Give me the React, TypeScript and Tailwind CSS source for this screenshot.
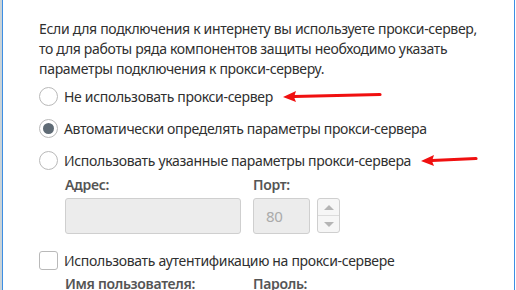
function Radio({ checked }: { checked?: boolean }) {
  return (
    <span className="flex h-[19px] w-[19px] shrink-0 items-center justify-center rounded-full border border-[#b9b9b9] bg-white">
      {checked && <span className="h-[11px] w-[11px] rounded-full bg-[#5f6b75]" />}
    </span>
  );
}

function Arrow({ width }: { width: number }) {
  return (
    <svg width={width} height="14" viewBox={`0 0 ${width} 14`} className="shrink-0">
      <path d={`M12 7.5 L${width - 2} 5.5`} stroke="#f01010" strokeWidth="3.2" strokeLinecap="round" />
      <path d="M1 8 L14 2 L12 8 L14 13 Z" fill="#f01010" />
    </svg>
  );
}

export default function App() {
  return (
    <div
      className="flex h-[290px] w-[516px] overflow-hidden bg-white text-[14px] tracking-[-0.32px] text-[#2f2f2f]"
      style={{ fontFamily: '"Noto Sans", "Open Sans", sans-serif' }}
    >
      <div className="w-[2px] shrink-0 bg-[#c9d3d8]" />
      <div className="w-[1px] shrink-0 bg-[#3d8ee3]" />
      <div className="flex-1 whitespace-nowrap pl-[36px] pt-[19px]">
        <p className="leading-[20px]">
          Если для подключения к интернету вы используете прокси-сервер,
          <br />
          то для работы ряда компонентов защиты необходимо указать
          <br />
          параметры подключения к прокси-серверу.
        </p>
        <div className="mt-[6px] flex h-[22px] items-center gap-[6px]">
          <Radio />
          <span>Не использовать прокси-сервер</span>
          <span className="ml-[3px]">
            <Arrow width={100} />
          </span>
        </div>
        <div className="mt-[10px] flex h-[22px] items-center gap-[6px]">
          <Radio checked />
          <span>Автоматически определять параметры прокси-сервера</span>
        </div>
        <div className="mt-[10px] flex h-[22px] items-center gap-[6px]">
          <Radio />
          <span>Использовать указанные параметры прокси-сервера</span>
          <span className="ml-[3px]">
            <Arrow width={58} />
          </span>
        </div>
        <div className="ml-[26px] mt-[4px] flex gap-[12px]">
          <div className="flex flex-col">
            <span className="font-semibold leading-[20px] text-[#555]">Адрес:</span>
            <div className="mt-[3px] h-[36px] w-[176px] rounded-[3px] border border-[#cfcfcf] bg-[#ececec]" />
          </div>
          <div className="flex flex-col">
            <span className="font-semibold leading-[20px] text-[#555]">Порт:</span>
            <div className="mt-[3px] flex gap-[7px]">
              <div className="flex h-[36px] w-[57px] items-center rounded-[3px] border border-[#cfcfcf] bg-[#ececec] pl-[12px] text-[15px] text-[#aaa]">
                80
              </div>
              <div className="flex h-[35px] w-[23px] flex-col overflow-hidden rounded-[3px] border border-[#cfcfcf] bg-[#f6f6f6]">
                <div className="flex flex-1 items-center justify-center border-b border-[#dcdcdc]">
                  <span className="h-0 w-0 border-x-[5px] border-b-[5px] border-x-transparent border-b-[#b5b5b5]" />
                </div>
                <div className="flex flex-1 items-center justify-center">
                  <span className="h-0 w-0 border-x-[5px] border-t-[5px] border-x-transparent border-t-[#b5b5b5]" />
                </div>
              </div>
            </div>
          </div>
        </div>
        <div className="mt-[16px] flex h-[20px] items-center gap-[6px]">
          <span className="h-[19px] w-[19px] shrink-0 rounded-[3px] border border-[#b9b9b9] bg-white" />
          <span>Использовать аутентификацию на прокси-сервере</span>
        </div>
        <div className="ml-[26px] mt-[4px] flex gap-[12px]">
          <span className="w-[176px] font-semibold leading-[20px] text-[#555]">Имя пользователя:</span>
          <span className="font-semibold leading-[20px] text-[#555]">Пароль:</span>
        </div>
      </div>
      <div className="w-[1px] shrink-0 bg-[#3d8ee3]" />
      <div className="w-[1px] shrink-0 bg-white" />
    </div>
  );
}
